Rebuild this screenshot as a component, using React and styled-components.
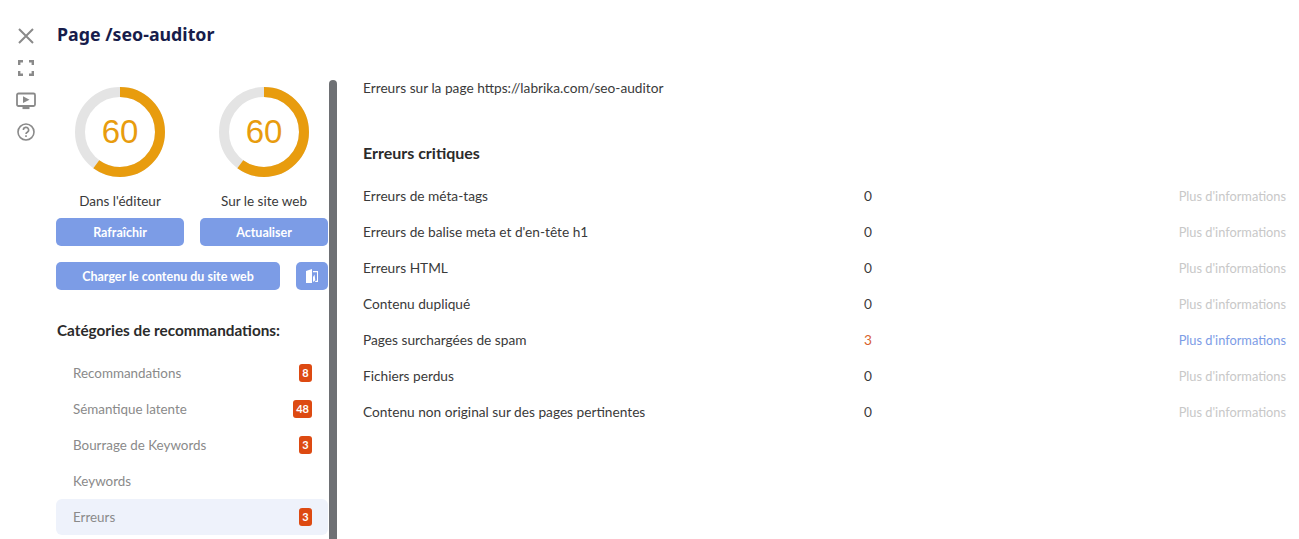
import React from 'react';
import styled, { createGlobalStyle } from 'styled-components';

const Global = createGlobalStyle`
  html, body { margin: 0; padding: 0; background: #fff; overflow: hidden; }
  body { font-family: "Lato", "Liberation Sans", sans-serif; color: #333; }
  * { box-sizing: border-box; }
`;
const Page = styled.div`
  display: flex; width: 1299px; height: 539px; overflow: hidden; background: #fff;
`;
const IconRail = styled.nav`
  width: 57px; flex: none; display: flex; flex-direction: column; align-items: flex-start;
  padding: 26px 0 0 16px; gap: 12px; color: #8a8a8a;
`;
const RailIcon = styled.span`
  display: flex; width: 20px; height: 20px; align-items: center; justify-content: center;
  padding-top: ${p => p.$nudge || 0}px;
`;
const Main = styled.div`
  flex: 1; min-width: 0; display: flex; flex-direction: column;
`;
const Title = styled.h1`
  margin: 0; height: 80px; padding-top: 22px;
  font: 700 17.8px/24px "Noto Sans", sans-serif; color: #171c4b;
`;
const Columns = styled.div`
  display: flex; flex: 1; min-height: 0;
`;
const Side = styled.aside`
  width: 281px; flex: none; margin-left: -1px; padding-right: 9px; position: relative;
  height: 459px; overflow: hidden;
`;
const Scrollbar = styled.div`
  position: absolute; right: 0; top: 0; bottom: 0; width: 8px; background: #6e7074;
  border-radius: 4px 4px 0 0;
`;
const Gauges = styled.div`
  display: grid; grid-template-columns: 128px 128px; column-gap: 16px; padding-top: 7px;
`;
const GaugeBox = styled.div`
  display: flex; flex-direction: column; align-items: center;
`;
const GaugeWrap = styled.div`
  position: relative; width: 90px; height: 90px;
`;
const GaugeValue = styled.span`
  position: absolute; inset: 0; display: flex; align-items: center; justify-content: center;
  font: 400 33px "Liberation Sans", sans-serif; color: #e89c0e;
`;
const GaugeLabel = styled.div`
  margin-top: 15px; font-size: 13.5px; line-height: 18px; color: #3a3a3a; height: 18px; white-space: nowrap;
`;
const ButtonRow = styled.div`
  display: grid; grid-template-columns: ${p => p.$cols}; column-gap: 16px; margin-top: ${p => p.$top}px;
`;
const Btn = styled.button`
  height: 28px; border: 0; border-radius: 5px; background: #7c9ce6; color: #fff; padding: 0;
  font: 700 12.5px "Lato", sans-serif; display: flex; align-items: center; justify-content: center;
`;
const CatTitle = styled.h2`
  margin: 30px 0 0 1px; font: 700 15.3px/20px "Lato", sans-serif; color: #2b2b2b; height: 35px;
`;
const CatList = styled.ul`
  list-style: none; margin: 0; padding: 0;
`;
const Cat = styled.li`
  height: 36px; padding: 0 16px 0 17px; display: flex; align-items: center; justify-content: space-between;
  font-size: 13.4px; color: #8a8a8a; border-radius: 6px; background: ${p => p.$active ? '#eef2fb' : 'transparent'};
`;
const Badge = styled.span`
  min-width: 13px; height: 18px; padding: 0 3px; border-radius: 3px; background: #dd4a12; color: #fff;
  font: 700 11px/18px "Lato", sans-serif; text-align: center;
`;
const Content = styled.section`
  flex: 1; min-width: 0; padding: 0 13px 0 26px;
`;
const Intro = styled.p`
  margin: -1px 0 0; font-size: 13.7px; line-height: 18px; color: #3a3a3a;
`;
const Section = styled.h3`
  margin: 45px 0 0; font: 700 16px/22px "Lato", sans-serif; color: #2b2b2b;
`;
const Table = styled.div`
  margin-top: 13px;
`;
const Row = styled.div`
  display: grid; grid-template-columns: 501px 1fr auto; align-items: center; height: 36px;
  font-size: 13.7px; color: #3a3a3a;
`;
const Count = styled.span`
  color: ${p => p.$hit ? '#d9622b' : '#3a3a3a'};
`;
const More = styled.a`
  padding-top: 2px; font-size: 12.8px; color: ${p => p.$on ? '#7c9ce6' : '#c8c8c8'};
`;

const Gauge = ({ value, label }) => {
  const r = 40, c = 2 * Math.PI * r;
  return (
    <GaugeBox>
      <GaugeWrap>
        <svg width="90" height="90" viewBox="0 0 90 90">
          <circle cx="45" cy="45" r={r} fill="none" stroke="#e4e4e4" strokeWidth="10" />
          <circle cx="45" cy="45" r={r} fill="none" stroke="#e89c0e" strokeWidth="10"
            strokeDasharray={`${c * value / 100} ${c}`} transform="rotate(-90 45 45)" />
        </svg>
        <GaugeValue>{value}</GaugeValue>
      </GaugeWrap>
      <GaugeLabel>{label}</GaugeLabel>
    </GaugeBox>
  );
};

const rows = [
  ['Erreurs de méta-tags', 0], ["Erreurs de balise meta et d'en-tête h1", 0], ['Erreurs HTML', 0],
  ['Contenu dupliqué', 0], ['Pages surchargées de spam', 3], ['Fichiers perdus', 0],
  ['Contenu non original sur des pages pertinentes', 0],
];
const cats = [['Recommandations', 8], ['Sémantique latente', 48], ['Bourrage de Keywords', 3], ['Keywords'], ['Erreurs', 3, true]];

export default function App() {
  return (
    <Page>
      <Global />
      <IconRail>
        <RailIcon>
          <svg width="20" height="20" viewBox="0 0 20 20" fill="none" stroke="currentColor" strokeWidth="2"><path d="M3 3l14 14M17 3L3 17" /></svg>
        </RailIcon>
        <RailIcon>
          <svg width="16" height="16" viewBox="0 0 16 16" fill="none" stroke="currentColor" strokeWidth="2.4"><path d="M1.2 5V1.2H5M11 1.2h3.8V5M14.8 11v3.8H11M5 14.8H1.2V11" /></svg>
        </RailIcon>
        <RailIcon $nudge={2}>
          <svg width="20" height="18" viewBox="0 0 20 18" fill="none" stroke="currentColor" strokeWidth="1.8"><rect x="1" y="1.5" width="18" height="12.5" rx="1.5" /><path d="M7 4.3l6.5 3.4L7 11z" fill="currentColor" stroke="none" /><path d="M6.5 16h7" strokeWidth="2.2" /></svg>
        </RailIcon>
        <RailIcon>
          <svg width="18" height="18" viewBox="0 0 18 18" fill="none" stroke="currentColor" strokeWidth="1.6"><circle cx="9" cy="9" r="8" /><path d="M6.4 7a2.6 2.6 0 1 1 3.9 2.2c-.9.5-1.3 1-1.3 1.9" /><path d="M9 12.2v1.7" /></svg>
        </RailIcon>
      </IconRail>
      <Main>
        <Title>Page /seo-auditor</Title>
        <Columns>
          <Side>
            <Scrollbar />
            <Gauges>
              <Gauge value={60} label="Dans l'éditeur" />
              <Gauge value={60} label="Sur le site web" />
            </Gauges>
            <ButtonRow $cols="128px 128px" $top={8}>
              <Btn>Rafraîchir</Btn>
              <Btn>Actualiser</Btn>
            </ButtonRow>
            <ButtonRow $cols="224px 32px" $top={16}>
              <Btn>Charger le contenu du site web</Btn>
              <Btn aria-label="Comparer">
                <svg width="14" height="14" viewBox="0 0 14 14" fill="#fff"><path d="M1 2L7 0v14H1z" /><path d="M8 2h5v11H9.5l1.5-1.2h1V3.2H8z" /><path d="M9.5 5.5l.8 5.7L8 13V8z" /></svg>
              </Btn>
            </ButtonRow>
            <CatTitle>Catégories de recommandations:</CatTitle>
            <CatList>
              {cats.map(([n, b, a]) => (
                <Cat key={n} $active={a}>{n}{b != null && <Badge>{b}</Badge>}</Cat>
              ))}
            </CatList>
          </Side>
          <Content>
            <Intro>Erreurs sur la page https://labrika.com/seo-auditor</Intro>
            <Section>Erreurs critiques</Section>
            <Table>
              {rows.map(([n, v]) => (
                <Row key={n}>
                  <span>{n}</span>
                  <Count $hit={v > 0}>{v}</Count>
                  <More $on={v > 0}>Plus d'informations</More>
                </Row>
              ))}
            </Table>
          </Content>
        </Columns>
      </Main>
    </Page>
  );
}
